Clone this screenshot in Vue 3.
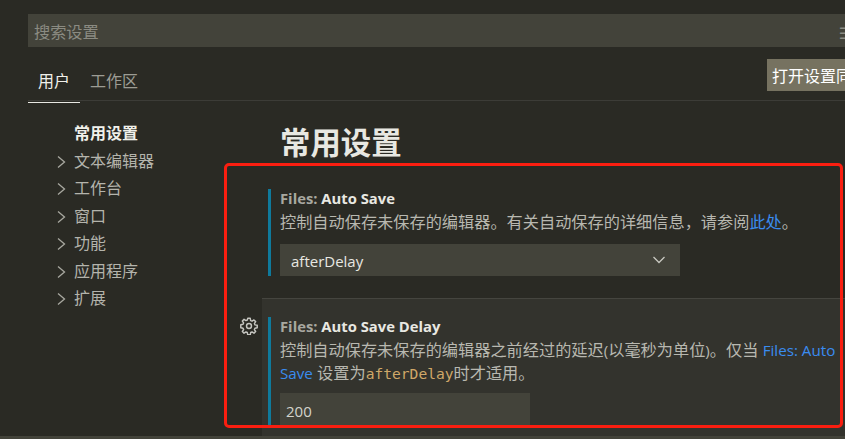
<script setup>
const treeItems = ["文本编辑器", "工作台", "窗口", "功能", "应用程序", "扩展"];
</script>

<template>
  <div class="page">
    <div class="search">
      <span class="search-text">搜索设置</span>
      <span class="search-icon">≡</span>
    </div>

    <div class="tabs">
      <div class="tab active">用户</div>
      <div class="tab">工作区</div>
      <button class="sync-btn">打开设置同步</button>
    </div>

    <div class="body">
      <aside class="tree">
        <div class="tree-row current">常用设置</div>
        <div v-for="item in treeItems" :key="item" class="tree-row">
          <svg class="chevron" width="12" height="16" viewBox="0 0 12 16">
            <path d="M2 2.5 L8.5 8 L2 13.5" fill="none" stroke="#a8a8a0" stroke-width="1.3" />
          </svg>
          {{ item }}
        </div>
      </aside>

      <main class="content">
        <h1 class="title">常用设置</h1>

        <section class="setting">
          <div class="setting-inner">
            <div class="setting-name"><span class="cat">Files: </span>Auto Save</div>
            <div class="setting-desc">控制自动保存未保存的编辑器。有关自动保存的详细信息，请参阅<span class="link">此处</span>。</div>
            <div class="select">
              afterDelay
              <svg width="14" height="14" viewBox="0 0 14 14">
                <path d="M1.5 4 L7 9.5 L12.5 4" fill="none" stroke="#c8c8c0" stroke-width="1.3" />
              </svg>
            </div>
          </div>
        </section>

        <section class="setting modified">
          <svg class="gear" width="18" height="18" viewBox="0 0 16 16">
            <path fill="none" stroke="#c5c5c0" stroke-width="1.3" stroke-linejoin="round"
              d="M6.9 1.2h2.2l.4 2 1.2.5 1.7-1.1 1.5 1.5-1.1 1.7.5 1.2 2 .4v2.2l-2 .4-.5 1.2 1.1 1.7-1.5 1.5-1.7-1.1-1.2.5-.4 2H6.9l-.4-2-1.2-.5-1.7 1.1-1.5-1.5 1.1-1.7-.5-1.2-2-.4V6.9l2-.4.5-1.2-1.1-1.7 1.5-1.5 1.7 1.1 1.2-.5z" />
            <circle cx="8" cy="8" r="2.2" fill="none" stroke="#c5c5c0" stroke-width="1.3" />
          </svg>
          <div class="setting-inner">
            <div class="setting-name"><span class="cat">Files: </span>Auto Save Delay</div>
            <div class="setting-desc">控制自动保存未保存的编辑器之前经过的延迟<span class="latin">(</span>以毫秒为单位<span class="latin">)</span>。仅当 <span class="link latin">Files: Auto Save</span> 设置为<code class="code">afterDelay</code>时才适用。</div>
            <div class="number">200</div>
          </div>
        </section>
      </main>
    </div>

    <div class="bottom-strip"></div>
    <div class="red-box"></div>
  </div>
</template>

<style scoped>
.page {
  position: relative;
  width: 845px;
  height: 439px;
  overflow: hidden;
  background: #2a2a24;
  color: #c4c4bd;
  font-family: "Open Sans", "Noto Sans CJK SC", sans-serif;
  font-size: 15px;
  padding-top: 14px;
  box-sizing: border-box;
}
.search {
  display: flex;
  justify-content: space-between;
  align-items: center;
  margin-left: 28px;
  height: 33px;
  padding-left: 6px;
  background: #43433a;
  white-space: nowrap;
}
.search-text {
  color: #8b8b82;
  font-size: 16.2px;
}
.search-icon {
  color: #8b8b82;
  font-size: 22px;
  margin-right: -14px;
}
.tabs {
  display: flex;
  align-items: flex-start;
  margin: 12px 0 0 28px;
  height: 41px;
  border-bottom: 1px solid #3c3c37;
  position: relative;
}
.tab {
  padding: 3px 10px 0;
  height: 33px;
  box-sizing: content-box;
  line-height: 25px;
  font-size: 16px;
  color: #9c9c94;
  margin-top: 7px;
}
.tab.active {
  color: #f0f0ea;
  border-bottom: 1px solid #e8e8e2;
}
.sync-btn {
  position: absolute;
  left: 739px;
  top: 0;
  width: 110px;
  height: 32px;
  padding: 0 0 0 5px;
  border: none;
  background: #767260;
  color: #fff;
  font: 16px "Noto Sans CJK SC", sans-serif;
  text-align: left;
  white-space: nowrap;
}
.body {
  display: flex;
}
.tree {
  width: 262px;
  flex: none;
  padding-top: 19px;
}
.tree-row {
  position: relative;
  height: 27.5px;
  line-height: 27.5px;
  padding-left: 74px;
  font-size: 16px;
  color: #b4b4ac;
}
.tree-row.current {
  color: #f0f0ea;
  font-weight: 700;
}
.chevron {
  position: absolute;
  left: 56px;
  top: 6px;
}
.content {
  flex: 1;
  min-width: 0;
}
.title {
  margin: 0 0 0 18px;
  padding-top: 20px;
  height: 61px;
  box-sizing: border-box;
  font-size: 30.4px;
  line-height: 44px;
  font-weight: 700;
  color: #e8e8e2;
}
.setting {
  position: relative;
  padding: 27px 0 22px 6px;
}
.setting.modified {
  background: #33332d;
  border-top: 1px solid #45453f;
  padding: 18px 0 11px 6px;
}
.setting-inner {
  border-left: 3px solid #0f7a9c;
  padding-left: 9px;
}
.setting-name {
  font-size: 14.8px;
  font-weight: 700;
  line-height: 18px;
  color: #e8e8e2;
}
.cat {
  color: #a8a8a0;
}
.setting-desc {
  font-size: 16.2px;
  line-height: 23px;
  margin-top: 4px;
  width: 564px;
  color: #b8b8b0;
}
.latin {
  font-size: 15.2px;
}
.link {
  color: #3a8cf0;
}
.code {
  font-family: "DejaVu Sans Mono", monospace;
  font-size: 14.6px;
  color: #d0a868;
}
.select {
  display: flex;
  justify-content: space-between;
  align-items: center;
  width: 400px;
  height: 32px;
  margin-top: 10px;
  padding: 2px 14px 0 11px;
  box-sizing: border-box;
  background: #43433a;
  color: #e8e8e2;
  font-size: 15px;
}
.select svg {
  margin-bottom: 2px;
}
.number {
  width: 250px;
  height: 32px;
  line-height: 36px;
  margin-top: 8px;
  padding-left: 6px;
  box-sizing: border-box;
  background: #43433a;
  color: #d4d4cc;
  font-size: 15px;
}
.gear {
  position: absolute;
  left: -22px;
  top: 18px;
}
.bottom-strip {
  height: 3px;
  background: #43433a;
}
.red-box {
  position: absolute;
  left: 224px;
  top: 163px;
  width: 619px;
  height: 265px;
  box-sizing: border-box;
  border: 3px solid #fa1e10;
  border-radius: 5px;
}
</style>
